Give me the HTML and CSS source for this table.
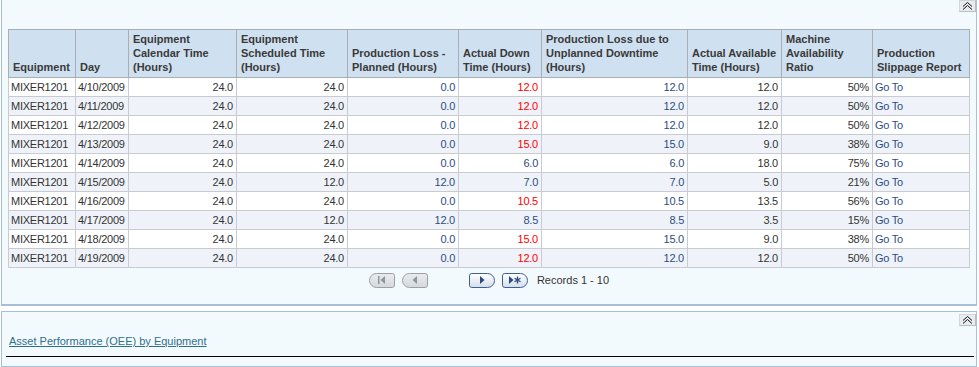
FILE: index.html
```html
<!DOCTYPE html>
<html lang="en">
<head>
    <meta charset="UTF-8">
    <title>Machine Availability</title>
    <link rel="stylesheet" href="styles.css">
</head>
<body>
    <div class="panel panel-clipped">
        <div class="panel-bar">
            <button class="collapse-btn" title="Collapse">
                <svg width="11" height="8" viewBox="0 0 11 8"><polyline points="1,4.5 5.5,0.5 10,4.5" /><polyline points="1,7.5 5.5,3.5 10,7.5" /></svg>
            </button>
        </div>
        <div class="panel-body">
            <table class="grid">
                <colgroup>
                    <col style="width:67px"><col style="width:53px"><col style="width:108px"><col style="width:111px"><col style="width:111px">
                    <col style="width:83px"><col style="width:146px"><col style="width:94px"><col style="width:91px"><col style="width:97px">
                </colgroup>
                <thead>
                    <tr>
                        <th>Equipment</th>
                        <th>Day</th>
                        <th>Equipment Calendar Time (Hours)</th>
                        <th>Equipment Scheduled Time (Hours)</th>
                        <th>Production Loss - Planned (Hours)</th>
                        <th>Actual Down Time (Hours)</th>
                        <th>Production Loss due to Unplanned Downtime (Hours)</th>
                        <th>Actual Available Time (Hours)</th>
                        <th>Machine Availability Ratio</th>
                        <th>Production Slippage Report</th>
                    </tr>
                </thead>
                <tbody id="rows"></tbody>
            </table>

            <div class="pager">
                <span class="pg-btn pg-left disabled">
                    <svg width="12" height="10" viewBox="0 0 12 10"><rect x="2" y="1" width="1.5" height="8" /><polygon points="9,1 9,9 4.5,5" /></svg>
                </span>
                <span class="pg-btn pg-left disabled">
                    <svg width="12" height="10" viewBox="0 0 12 10"><polygon points="8,1 8,9 3.5,5" /></svg>
                </span>
                <span class="pg-gap"></span>
                <span class="pg-btn pg-right">
                    <svg width="12" height="10" viewBox="0 0 12 10"><polygon points="4,1 4,9 8.5,5" /></svg>
                </span>
                <span class="pg-btn pg-right">
                    <svg width="16" height="10" viewBox="0 0 16 10"><polygon points="2,1 2,9 6.5,5" /><path d="M10.5 1.5v7M7.5 3.2l6 3.6M7.5 6.8l6-3.6" /></svg>
                </span>
                <span class="pg-text">Records 1 - 10</span>
            </div>
        </div>
    </div>

    <div class="panel">
        <div class="panel-bar">
            <button class="collapse-btn" title="Collapse">
                <svg width="11" height="8" viewBox="0 0 11 8"><polyline points="1,4.5 5.5,0.5 10,4.5" /><polyline points="1,7.5 5.5,3.5 10,7.5" /></svg>
            </button>
        </div>
        <div class="panel-body links">
            <a href="#" class="report-link">Asset Performance (OEE) by Equipment</a>
            <div class="rule"></div>
        </div>
    </div>

    <script>
        // equipment availability rows
        const data = [
            ['4/10/2009', 24, 24, 0, 12, 12, 12, 50],
            ['4/11/2009', 24, 24, 0, 12, 12, 12, 50],
            ['4/12/2009', 24, 24, 0, 12, 12, 12, 50],
            ['4/13/2009', 24, 24, 0, 15, 15, 9, 38],
            ['4/14/2009', 24, 24, 0, 6, 6, 18, 75],
            ['4/15/2009', 24, 12, 12, 7, 7, 5, 21],
            ['4/16/2009', 24, 24, 0, 10.5, 10.5, 13.5, 56],
            ['4/17/2009', 24, 12, 12, 8.5, 8.5, 3.5, 15],
            ['4/18/2009', 24, 24, 0, 15, 15, 9, 38],
            ['4/19/2009', 24, 24, 0, 12, 12, 12, 50]
        ];

        const tbody = document.getElementById('rows');
        data.forEach((r) => {
            const downClass = r[4] >= 10 ? 'num red' : 'num blue';
            const tr = document.createElement('tr');
            tr.innerHTML =
                `<td>MIXER1201</td>
                 <td>${r[0]}</td>
                 <td class="num">${r[1].toFixed(1)}</td>
                 <td class="num">${r[2].toFixed(1)}</td>
                 <td class="num blue">${r[3].toFixed(1)}</td>
                 <td class="${downClass}">${r[4].toFixed(1)}</td>
                 <td class="num blue">${r[5].toFixed(1)}</td>
                 <td class="num">${r[6].toFixed(1)}</td>
                 <td class="num">${r[7]}%</td>
                 <td><a href="#" class="goto">Go To</a></td>`;
            tbody.appendChild(tr);
        });
    </script>
</body>
</html>
```

FILE: styles.css
```css
* {
    box-sizing: border-box;
}

body {
    margin: 0 2px 0 1px;
    font-family: "Liberation Sans", Arial, sans-serif;
    font-size: 11px;
    color: #333;
    background: #fff;
    overflow: hidden;
}

.panel {
    background: #f3fafd;
    border: 1px solid #a7c0d8;
    margin-bottom: 5px;
}

.panel-clipped {
    margin-top: -3px;
    border-bottom-width: 2px;
}

.panel-bar {
    display: flex;
    justify-content: flex-end;
    padding: 2px 0 0;
}

.collapse-btn {
    width: 17px;
    height: 12px;
    padding: 0;
    border: 1px solid #d3d7db;
    border-right-color: #b9bec3;
    border-bottom-color: #b9bec3;
    background: #e9ecef;
    display: flex;
    align-items: center;
    justify-content: center;
}

.collapse-btn svg {
    fill: none;
    stroke: #111;
    stroke-width: 1;
}

.panel-body {
    padding: 17px 0 16px 6px;
}

/* data grid */
.grid {
    border-collapse: collapse;
    table-layout: fixed;
    width: 962px;
    border: 1px solid #b4b8bf;
}

.grid th {
    background: #cfe0f0;
    color: #3a3a3a;
    font-weight: bold;
    text-align: left;
    vertical-align: bottom;
    line-height: 14px;
    padding: 2px 2px 3px 4px;
    border: 1px solid #a9adb4;
    height: 47px;
}

.grid td {
    height: 19px;
    line-height: 18px;
    padding: 0 3px 0 2px;
    border: 1px solid #c8cbd1;
    white-space: nowrap;
    color: #333;
    letter-spacing: -0.25px;
}

.grid tbody tr:nth-child(even) td {
    background: #eff3f9;
}

.grid tbody tr:nth-child(odd) td {
    background: #fff;
}

.grid td.num {
    text-align: right;
}

.grid td.blue {
    color: #2b4d80;
}

.grid td.red {
    color: #ff0000;
}

.goto {
    color: #2b4d86;
    text-decoration: none;
}

/* pager */
.pager {
    display: flex;
    align-items: center;
    justify-content: center;
    gap: 7px;
    width: 962px;
    margin-top: 4px;
    height: 16px;
}

.pg-btn {
    width: 26px;
    height: 15px;
    display: flex;
    align-items: center;
    justify-content: center;
    border: 1px solid #3f5f8e;
    background: linear-gradient(#ffffff, #d4deec);
    fill: #2c4a7a;
    stroke: #2c4a7a;
    stroke-width: 1.3;
}

.pg-btn svg polygon,
.pg-btn svg rect {
    stroke: none;
}

.pg-left {
    border-radius: 8px 3px 3px 8px;
}

.pg-right {
    border-radius: 3px 8px 8px 3px;
}

.pg-btn.disabled {
    border-color: #9a9fa5;
    background: linear-gradient(#e9ebee, #d5d9de);
    fill: #8e949b;
}

.pg-gap {
    width: 27px;
}

.pg-text {
    margin-left: 2px;
    color: #333;
}

/* links panel */
.links {
    padding: 8px 2px 9px 4px;
}

.report-link {
    display: block;
    padding-left: 3px;
    line-height: 14px;
    color: #2f6f8c;
    text-decoration: underline;
}

.rule {
    margin-top: 8px;
    height: 1px;
    background: #000;
}
```
